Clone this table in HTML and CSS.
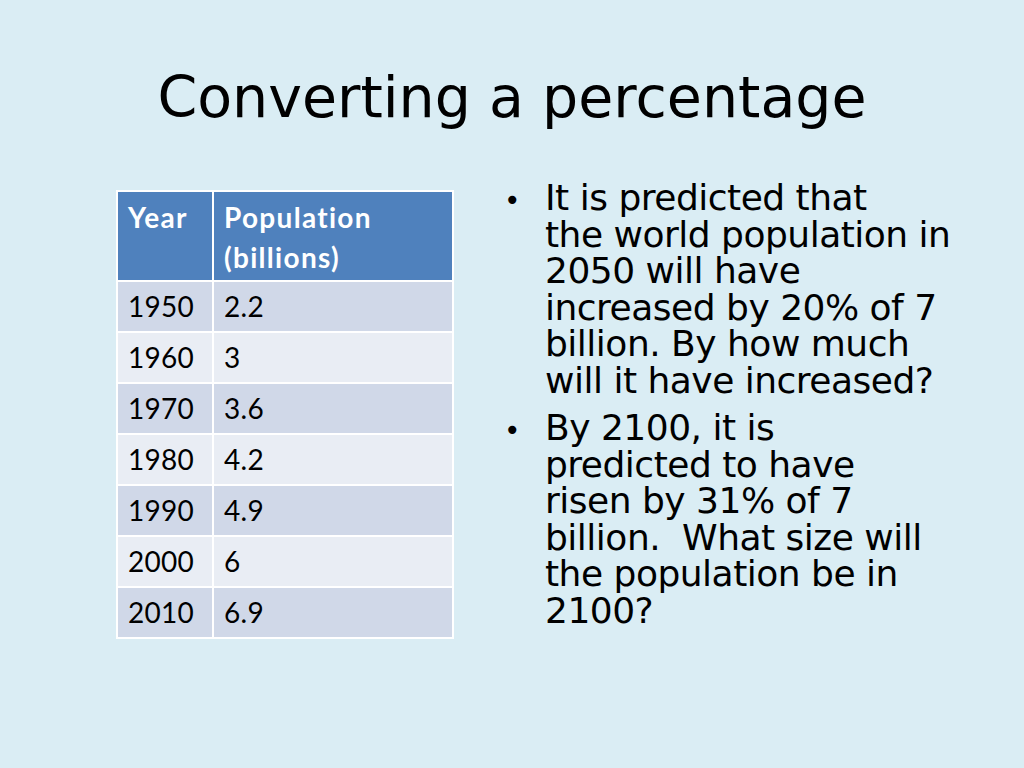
FILE: index.html
```html
<!DOCTYPE html>
<html>
<head>
<meta charset="utf-8">
<link rel="stylesheet" href="styles.css">
</head>
<body>
<div class="slide">
  <h1 class="title">Converting a percentage</h1>
  <div class="content">
    <table class="pop">
      <thead>
        <tr><th class="c1">Year</th><th class="c2">Population<br>(billions)</th></tr>
      </thead>
      <tbody>
        <tr class="odd"><td>1950</td><td>2.2</td></tr>
        <tr class="even"><td>1960</td><td>3</td></tr>
        <tr class="odd"><td>1970</td><td>3.6</td></tr>
        <tr class="even"><td>1980</td><td>4.2</td></tr>
        <tr class="odd"><td>1990</td><td>4.9</td></tr>
        <tr class="even"><td>2000</td><td>6</td></tr>
        <tr class="odd"><td>2010</td><td>6.9</td></tr>
      </tbody>
    </table>
    <ul class="bullets">
      <li><span class="txt">It is predicted that<br>the world population in<br>2050 will have<br>increased by 20% of 7<br>billion. By how much<br>will it have increased?</span></li>
      <li><span class="txt">By 2100, it is<br>predicted to have<br>risen by 31% of 7<br>billion.&nbsp; What size will<br>the population be in<br>2100?</span></li>
    </ul>
  </div>
</div>
</body>
</html>
```
FILE: styles.css
```css
html, body {
  margin: 0;
  padding: 0;
}
body {
  background: #daedf4;
  width: 1024px;
  height: 768px;
  overflow: hidden;
}
.slide {
  display: flex;
  flex-direction: column;
}
.title {
  margin: 0;
  padding-top: 62px;
  height: 128px;
  box-sizing: border-box;
  text-align: center;
  font-family: "DejaVu Sans", sans-serif;
  font-weight: normal;
  font-size: 57px;
  line-height: 70px;
  color: #000;
  letter-spacing: 0;
}
.content {
  display: flex;
  padding-top: 62px;
  padding-left: 116px;
}
.pop {
  border-collapse: collapse;
  font-family: Lato, "Liberation Sans", sans-serif;
  font-size: 28px;
  color: #000;
  width: 338px;
  align-self: flex-start;
}
.pop th, .pop td {
  border: 2px solid #ffffff;
  text-align: left;
  vertical-align: top;
  padding: 0 10px;
}
.pop th {
  background: #4f81bd;
  color: #fff;
  font-weight: bold;
  height: 90px;
  line-height: 40px;
  padding-top: 5px;
  box-sizing: border-box;
  letter-spacing: 1.3px;
}
.pop .c1 {
  width: 96px;
}
.pop td {
  height: 49px;
  line-height: 49px;
  padding-top: 0;
  padding-bottom: 0;
  letter-spacing: 0.3px;
}
.pop tr.odd td {
  background: #d0d8e8;
}
.pop tr.even td {
  background: #e9edf4;
}
.bullets {
  list-style: none;
  margin: 0;
  margin-left: 48px;
  margin-top: -10px;
  padding: 0;
  font-family: "DejaVu Sans", sans-serif;
  font-size: 36px;
  line-height: 36.5px;
  color: #000;
  letter-spacing: -0.5px;
  white-space: nowrap;
}
.bullets li {
  display: flex;
  margin-bottom: 11px;
}
.bullets li::before {
  content: "\2022";
  width: 43px;
  flex: none;
  font-size: 28px;
  padding-left: 2px;
  padding-top: 3px;
  box-sizing: border-box;
}
```
